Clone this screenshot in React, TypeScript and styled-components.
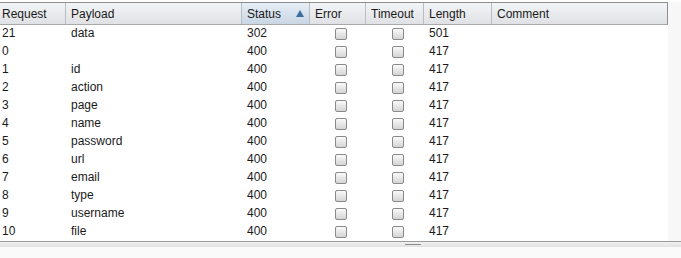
import styled, { createGlobalStyle, css } from 'styled-components';

const GlobalStyle = createGlobalStyle`
  html, body { margin: 0; padding: 0; background: #ffffff; }
  body { font-family: "Liberation Sans", Arial, sans-serif; font-size: 12px; color: #1a1a1a; }
`;

const Page = styled.div`
  width: 681px;
  height: 258px;
  display: flex;
  flex-direction: column;
  overflow: hidden;
  background: #fdfdfd;
`;

const Pane = styled.div`
  display: flex;
  padding-top: 2px;
  height: 239px;
`;

const Table = styled.div`
  width: 668px;
  display: flex;
  flex-direction: column;
  background: #ffffff;
`;

const Side = styled.div`
  flex: 1;
  background: #f7f7f7;
`;

const cols = '66px 176px 68px 56px 58px 68px 1fr';

const HeadRow = styled.div`
  display: grid;
  grid-template-columns: ${cols};
  height: 21px;
  border-top: 1px solid #8e8e8e;
  border-bottom: 1px solid #a9a9a9;
  border-right: 1px solid #8e8e8e;
  background: linear-gradient(#f3f4f6, #dfe1e5);
`;

const HeadCell = styled.div<{ $sorted?: boolean }>`
  display: flex;
  align-items: center;
  justify-content: space-between;
  padding: 0 5px 0 5px;
  border-right: 1px solid #b9bcc2;
  color: #1a1a1a;
  &:first-child { padding-left: 2px; }
  &:last-child { border-right: none; }
  ${(p) =>
    p.$sorted &&
    css`
      background: linear-gradient(#e6eef6, #c9d6e4);
    `}
`;

const SortArrow = styled.span`
  width: 0;
  height: 0;
  border-left: 4px solid transparent;
  border-right: 4px solid transparent;
  border-bottom: 7px solid #3d6f9d;
  margin-right: 0;
`;

const Row = styled.div`
  display: grid;
  grid-template-columns: ${cols};
  height: 18px;
  align-items: center;
`;

const Cell = styled.div<{ $center?: boolean }>`
  padding-left: 5px;
  display: flex;
  justify-content: ${(p) => (p.$center ? 'center' : 'flex-start')};
  white-space: nowrap;
  margin-top: -2px;
  &:first-child { padding-left: 2px; }
`;

const Check = styled.span`
  width: 10px;
  height: 10px;
  margin-top: 2px;
  border: 1px solid #8a8a8a;
  border-radius: 2px;
  background: linear-gradient(#fafafa, #d4d4d4);
`;

const Divider = styled.div`
  height: 6px;
  border-top: 1px solid #9c9c9c;
  background: linear-gradient(#f0f0f0, #e2e2e2);
  display: flex;
  justify-content: center;
  padding-left: 145px;
  box-sizing: border-box;
`;

const Grip = styled.span`
  width: 16px;
  height: 1px;
  margin-top: 2px;
  background: #8c8c8c;
`;

const Lower = styled.div`
  flex: 1;
  background: #fafafa;
`;

const rows: [string, string, string, string][] = [
  ['21', 'data', '302', '501'],
  ['0', '', '400', '417'],
  ['1', 'id', '400', '417'],
  ['2', 'action', '400', '417'],
  ['3', 'page', '400', '417'],
  ['4', 'name', '400', '417'],
  ['5', 'password', '400', '417'],
  ['6', 'url', '400', '417'],
  ['7', 'email', '400', '417'],
  ['8', 'type', '400', '417'],
  ['9', 'username', '400', '417'],
  ['10', 'file', '400', '417'],
];

export default function App() {
  return (
    <Page>
      <GlobalStyle />
      <Pane>
        <Table>
          <HeadRow>
            <HeadCell>Request</HeadCell>
            <HeadCell>Payload</HeadCell>
            <HeadCell $sorted>
              Status
              <SortArrow />
            </HeadCell>
            <HeadCell>Error</HeadCell>
            <HeadCell>Timeout</HeadCell>
            <HeadCell>Length</HeadCell>
            <HeadCell>Comment</HeadCell>
          </HeadRow>
          {rows.map(([req, payload, status, len]) => (
            <Row key={req}>
              <Cell>{req}</Cell>
              <Cell>{payload}</Cell>
              <Cell>{status}</Cell>
              <Cell $center>
                <Check />
              </Cell>
              <Cell $center>
                <Check />
              </Cell>
              <Cell>{len}</Cell>
              <Cell />
            </Row>
          ))}
        </Table>
        <Side />
      </Pane>
      <Divider>
        <Grip />
      </Divider>
      <Lower />
    </Page>
  );
}
